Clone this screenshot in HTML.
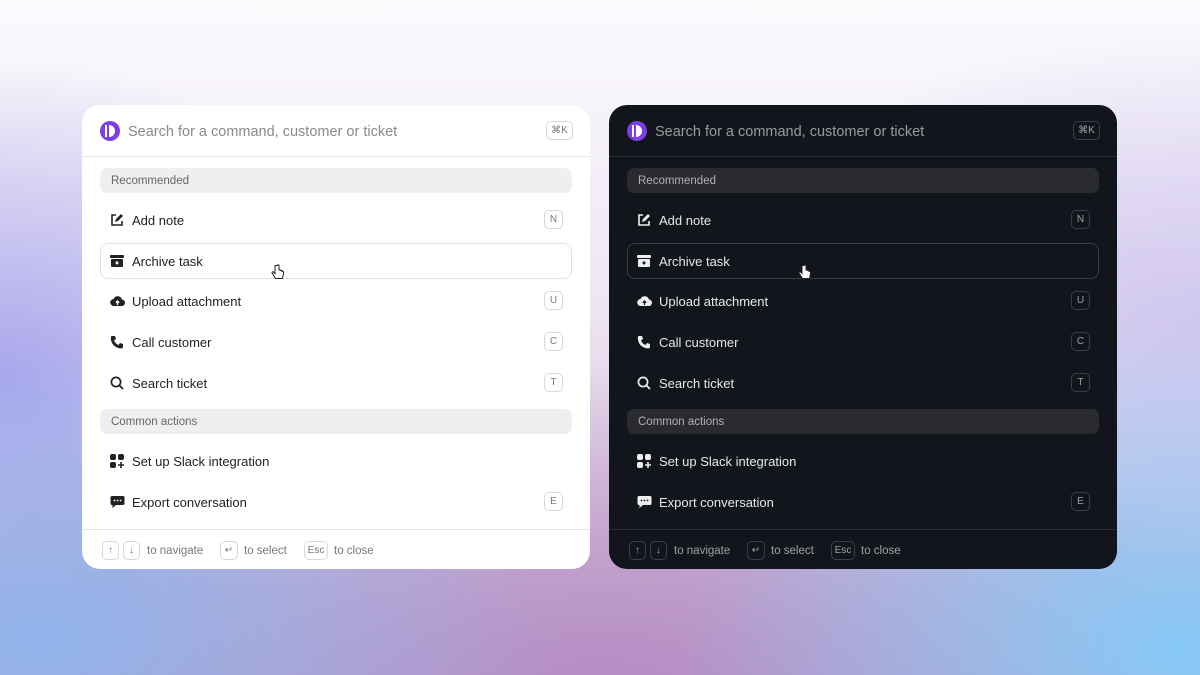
<!DOCTYPE html>
<html><head><meta charset="utf-8"><style>
*{box-sizing:border-box;margin:0;padding:0}
body{width:1200px;height:675px;overflow:hidden;font-family:"Liberation Sans",sans-serif;position:relative;
background:
radial-gradient(ellipse 520px 300px at 40px 640px,#8fb3ea 0%,rgba(143,179,234,0) 100%),
radial-gradient(ellipse 500px 320px at 1180px 650px,#86c8f6 0%,rgba(134,200,246,0) 100%),
radial-gradient(ellipse 700px 330px at 600px 700px,#b48cc4 0%,rgba(180,140,196,0) 100%),
radial-gradient(ellipse 420px 320px at 0px 380px,#a9a6ec 0%,rgba(169,166,236,0) 100%),
radial-gradient(ellipse 500px 300px at 1200px 330px,#cfc6ef 0%,rgba(207,198,239,0) 100%),
linear-gradient(180deg,#fbfafd 0%,#eee6f4 45%,#c9a8cc 100%);}
.p{position:absolute;top:105px;width:508px;height:464px;border-radius:18px;overflow:hidden}
.l{left:82px;background:#fff;color:#222}
.d{left:609px;background:#12151c;color:#e8e8ea}
.hd{height:52px;border-bottom:1px solid #e6e6e8;position:relative}
.d .hd{border-color:#2c2f36}
.logo{position:absolute;left:18px;top:16px;width:20px;height:20px;border-radius:50%;background:#7b3fe4}
.logo:before{content:"";position:absolute;left:5px;top:4px;width:2px;height:12px;background:#fff}
.logo:after{content:"";position:absolute;left:9px;top:4px;width:6px;height:12px;border-radius:0 6px 6px 0;background:#fff}
.ph{position:absolute;left:46px;top:19px;font-size:14.5px;color:#8a8a8e}
.d .ph{color:#9a9ba0}
.k{position:absolute;border:1px solid #d8d8dc;border-radius:5px;font-size:10px;color:#777;text-align:center;line-height:18px;height:19px}
.d .k{border-color:#3c3f46;color:#a0a0a6}
.sec{position:absolute;left:18px;width:472px;height:25px;border-radius:7px;background:#efeff1;font-size:11.5px;color:#666;padding-left:11px;line-height:27px}
.d .sec{background:#2a2b2f;color:#b0b0b5}
.row{position:absolute;left:18px;width:472px;height:36px;font-size:13px;line-height:37px;padding-left:32px}
.row.sel{border:1px solid #e2e2e5;border-radius:8px;line-height:35px;padding-left:31px}
.d .row.sel{border-color:#3a3d44}
.row svg{position:absolute;left:10px;top:11px}
.row .k{right:9px;top:8px;width:19px}
.row.sel svg{left:9px;top:10px}
.ft{position:absolute;left:0;top:424px;width:100%;height:40px;border-top:1px solid #e6e6e8;font-size:11.5px;color:#777}
.d .ft{border-color:#2c2f36;color:#a0a0a6}
.ft span{position:absolute;top:15px}
.ft .k{top:11px}
</style></head><body>

<div class="p l">
<div class="hd"><div class="logo"></div><div class="ph">Search for a command, customer or ticket</div><div class="k" style="left:464px;top:16px;width:27px">⌘K</div></div>
<div class="sec" style="top:63px">Recommended</div>
<div class="row" style="top:97px"><svg width="14" height="14" viewBox="0 0 14 14"><path d="M6 2H2v10h10V8" fill="none" stroke="#222" stroke-width="1.6"/><path d="M5 9l1-3 5-5 2 2-5 5z" fill="#222"/></svg>Add note<div class="k">N</div></div>
<div class="row sel" style="top:138px"><svg width="14" height="14" viewBox="0 0 14 14"><rect x="0" y="1" width="14" height="3" rx="1" fill="#222"/><rect x="1" y="5" width="12" height="8" rx="1" fill="#222"/><path d="M7 7v3M5.5 8.5L7 10l1.5-1.5" stroke="#fff" stroke-width="1.2" fill="none"/></svg>Archive task</div>
<div class="row" style="top:178px"><svg width="15" height="14" viewBox="0 0 15 14"><path d="M4 12a3.5 3.5 0 0 1-.5-7A4.5 4.5 0 0 1 12 5.5 3.2 3.2 0 0 1 11.5 12z" fill="#222"/><path d="M7.5 11V7M5.8 8.7L7.5 7l1.7 1.7" stroke="#fff" stroke-width="1.3" fill="none"/></svg>Upload attachment<div class="k">U</div></div>
<div class="row" style="top:219px"><svg width="14" height="14" viewBox="0 0 14 14"><path d="M2 1l3 0 1 3-2 1.5a8 8 0 0 0 4.5 4.5L10 8l3 1v3c0 1-1 1.5-2 1.5C5 13 1 9 .8 3 .8 2 1 1 2 1z" fill="#222"/></svg>Call customer<div class="k">C</div></div>
<div class="row" style="top:260px"><svg width="14" height="14" viewBox="0 0 14 14"><circle cx="6" cy="6" r="4.6" fill="none" stroke="#222" stroke-width="1.7"/><path d="M9.5 9.5l3.5 3.5" stroke="#222" stroke-width="1.8"/></svg>Search ticket<div class="k">T</div></div>
<div class="sec" style="top:304px">Common actions</div>
<div class="row" style="top:338px"><svg width="14" height="14" viewBox="0 0 14 14"><rect x="0" y="0" width="6" height="6" rx="2" fill="#222"/><rect x="8" y="0" width="6" height="6" rx="2" fill="#222"/><rect x="0" y="8" width="6" height="6" rx="2" fill="#222"/><path d="M11 8v6M8 11h6" stroke="#222" stroke-width="1.6"/></svg>Set up Slack integration</div>
<div class="row" style="top:379px"><svg width="15" height="14" viewBox="0 0 15 14"><path d="M2 1h11a1.5 1.5 0 0 1 1.5 1.5v6A1.5 1.5 0 0 1 13 10H6l-3.5 3v-3H2A1.5 1.5 0 0 1 .5 8.5v-6A1.5 1.5 0 0 1 2 1z" fill="#222"/><circle cx="4.5" cy="5.5" r=".9" fill="#fff"/><circle cx="7.5" cy="5.5" r=".9" fill="#fff"/><circle cx="10.5" cy="5.5" r=".9" fill="#fff"/></svg>Export conversation<div class="k">E</div></div>
<div class="ft"><div class="k" style="left:20px;width:17px">↑</div><div class="k" style="left:41px;width:17px">↓</div><span style="left:65px">to navigate</span><div class="k" style="left:138px;width:18px">↵</div><span style="left:162px">to select</span><div class="k" style="left:222px;width:24px">Esc</div><span style="left:252px">to close</span></div>
</div>

<div class="p d">
<div class="hd"><div class="logo"></div><div class="ph">Search for a command, customer or ticket</div><div class="k" style="left:464px;top:16px;width:27px">⌘K</div></div>
<div class="sec" style="top:63px">Recommended</div>
<div class="row" style="top:97px"><svg width="14" height="14" viewBox="0 0 14 14"><path d="M6 2H2v10h10V8" fill="none" stroke="#eee" stroke-width="1.6"/><path d="M5 9l1-3 5-5 2 2-5 5z" fill="#eee"/></svg>Add note<div class="k">N</div></div>
<div class="row sel" style="top:138px"><svg width="14" height="14" viewBox="0 0 14 14"><rect x="0" y="1" width="14" height="3" rx="1" fill="#eee"/><rect x="1" y="5" width="12" height="8" rx="1" fill="#eee"/><path d="M7 7v3M5.5 8.5L7 10l1.5-1.5" stroke="#12151c" stroke-width="1.2" fill="none"/></svg>Archive task</div>
<div class="row" style="top:178px"><svg width="15" height="14" viewBox="0 0 15 14"><path d="M4 12a3.5 3.5 0 0 1-.5-7A4.5 4.5 0 0 1 12 5.5 3.2 3.2 0 0 1 11.5 12z" fill="#eee"/><path d="M7.5 11V7M5.8 8.7L7.5 7l1.7 1.7" stroke="#12151c" stroke-width="1.3" fill="none"/></svg>Upload attachment<div class="k">U</div></div>
<div class="row" style="top:219px"><svg width="14" height="14" viewBox="0 0 14 14"><path d="M2 1l3 0 1 3-2 1.5a8 8 0 0 0 4.5 4.5L10 8l3 1v3c0 1-1 1.5-2 1.5C5 13 1 9 .8 3 .8 2 1 1 2 1z" fill="#eee"/></svg>Call customer<div class="k">C</div></div>
<div class="row" style="top:260px"><svg width="14" height="14" viewBox="0 0 14 14"><circle cx="6" cy="6" r="4.6" fill="none" stroke="#eee" stroke-width="1.7"/><path d="M9.5 9.5l3.5 3.5" stroke="#eee" stroke-width="1.8"/></svg>Search ticket<div class="k">T</div></div>
<div class="sec" style="top:304px">Common actions</div>
<div class="row" style="top:338px"><svg width="14" height="14" viewBox="0 0 14 14"><rect x="0" y="0" width="6" height="6" rx="2" fill="#eee"/><rect x="8" y="0" width="6" height="6" rx="2" fill="#eee"/><rect x="0" y="8" width="6" height="6" rx="2" fill="#eee"/><path d="M11 8v6M8 11h6" stroke="#eee" stroke-width="1.6"/></svg>Set up Slack integration</div>
<div class="row" style="top:379px"><svg width="15" height="14" viewBox="0 0 15 14"><path d="M2 1h11a1.5 1.5 0 0 1 1.5 1.5v6A1.5 1.5 0 0 1 13 10H6l-3.5 3v-3H2A1.5 1.5 0 0 1 .5 8.5v-6A1.5 1.5 0 0 1 2 1z" fill="#eee"/><circle cx="4.5" cy="5.5" r=".9" fill="#12151c"/><circle cx="7.5" cy="5.5" r=".9" fill="#12151c"/><circle cx="10.5" cy="5.5" r=".9" fill="#12151c"/></svg>Export conversation<div class="k">E</div></div>
<div class="ft"><div class="k" style="left:20px;width:17px">↑</div><div class="k" style="left:41px;width:17px">↓</div><span style="left:65px">to navigate</span><div class="k" style="left:138px;width:18px">↵</div><span style="left:162px">to select</span><div class="k" style="left:222px;width:24px">Esc</div><span style="left:252px">to close</span></div>
</div>

<svg style="position:absolute;left:271px;top:264px" width="14" height="17" viewBox="0 0 14 17"><path d="M4 1.5v8L2.5 8C1.5 7.3.5 8.2 1.2 9.2L4.5 14.5h7l1-5V8c0-1-1.5-1-1.5 0V7c0-1-1.5-1-1.5 0V6.5c0-1-1.5-1-1.5 0V1.5c0-1-1.5-1-1.5 0z" fill="#fff" stroke="#222" stroke-width="1"/></svg>
<svg style="position:absolute;left:798px;top:264px" width="14" height="17" viewBox="0 0 14 17"><path d="M4 1.5v8L2.5 8C1.5 7.3.5 8.2 1.2 9.2L4.5 14.5h7l1-5V8c0-1-1.5-1-1.5 0V7c0-1-1.5-1-1.5 0V6.5c0-1-1.5-1-1.5 0V1.5c0-1-1.5-1-1.5 0z" fill="#fff" stroke="#222" stroke-width="1"/></svg>
</body></html>
